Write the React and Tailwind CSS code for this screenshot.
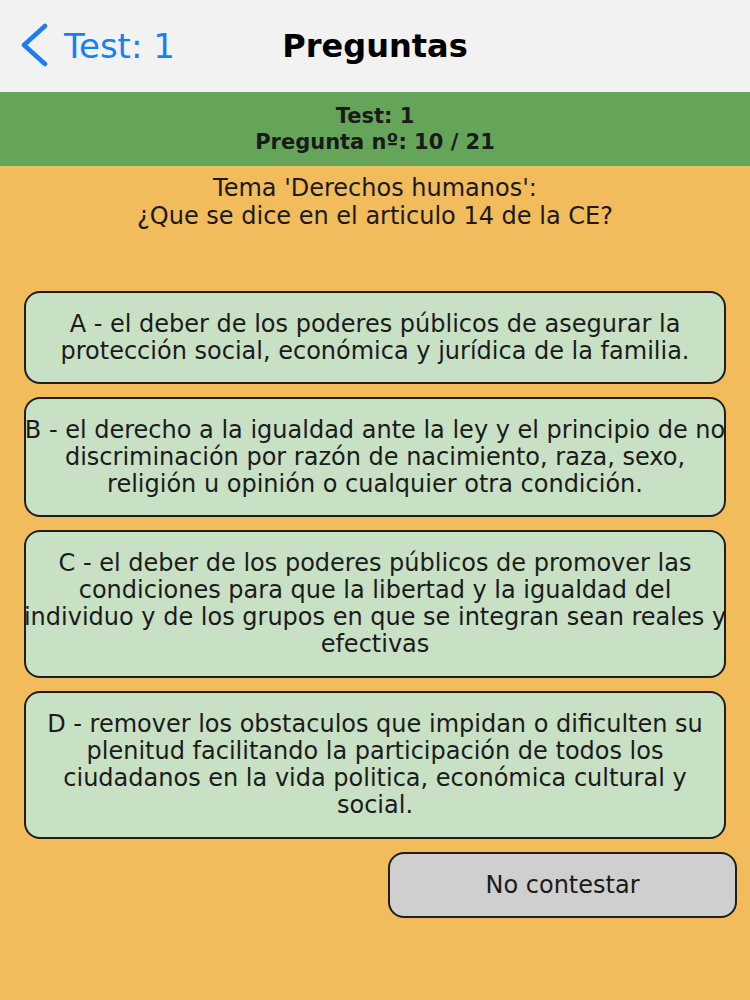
import React from "react";

const answers = [
  {
    h: "h-[93px]",
    lines: [
      "A - el deber de los poderes públicos de asegurar la",
      "protección social, económica y jurídica de la familia.",
    ],
  },
  {
    h: "h-[120px]",
    lines: [
      "B - el derecho a la igualdad ante la ley y el principio de no",
      "discriminación por razón de nacimiento, raza, sexo,",
      "religión u opinión o cualquier otra condición.",
    ],
  },
  {
    h: "h-[148px]",
    lines: [
      "C - el deber de los poderes públicos de promover las",
      "condiciones para que la libertad y la igualdad del",
      "individuo y de los grupos en que se integran sean reales y",
      "efectivas",
    ],
  },
  {
    h: "h-[148px]",
    lines: [
      "D - remover los obstaculos que impidan o dificulten su",
      "plenitud facilitando la participación de todos los",
      "ciudadanos en la vida politica, económica cultural y",
      "social.",
    ],
  },
];

const Answer = ({ h, lines }) => (
  <div
    className={`${h} w-full flex flex-col items-center justify-center bg-[#c8e1c4] border-2 border-[#1e1e1e] rounded-[16px] text-[24px] leading-[27px] text-[#1b1b1b]`}
  >
    {lines.map((l, i) => (
      <div key={i} className="whitespace-nowrap">
        {l}
      </div>
    ))}
  </div>
);

export default function App() {
  return (
    <div className="w-[750px] h-[1000px] flex flex-col bg-[#f2bb5b] font-['DejaVu_Sans',sans-serif] overflow-hidden">
      {/* nav bar */}
      <div className="h-[92px] shrink-0 grid grid-cols-[1fr_auto_1fr] items-center bg-[#f1f2f1]">
        <div className="flex items-center pl-[18px] text-[#1a7ef0]">
          <svg width="32" height="44" viewBox="0 0 32 44" className="mb-[2px]">
            <path
              d="M27 3 L6 22 L27 41"
              fill="none"
              stroke="#1a7ef0"
              strokeWidth="4.5"
              strokeLinecap="round"
              strokeLinejoin="round"
            />
          </svg>
          <span className="ml-[14px] text-[34px] leading-none">Test: 1</span>
        </div>
        <h1 className="text-[32px] font-bold leading-none text-black">Preguntas</h1>
        <div />
      </div>

      {/* green info bar */}
      <div className="h-[74px] shrink-0 flex flex-col items-center justify-center bg-[#64a55a] text-[21px] font-bold leading-[26px] text-[#1a1a1a]">
        <div>Test: 1</div>
        <div>Pregunta nº: 10 / 21</div>
      </div>

      {/* question */}
      <div className="pt-[8px] flex flex-col items-center text-[24px] leading-[28px] text-[#1a1a1a]">
        <div>Tema 'Derechos humanos':</div>
        <div>¿Que se dice en el articulo 14 de la CE?</div>
      </div>

      {/* answers */}
      <div className="mt-[61px] px-[24px] flex flex-col gap-[13px]">
        {answers.map((a, i) => (
          <Answer key={i} h={a.h} lines={a.lines} />
        ))}
      </div>

      <div className="mt-[13px] ml-[388px] w-[349px] h-[66px] flex items-center justify-center bg-[#d0cfd0] border-2 border-[#1e1e1e] rounded-[16px] text-[24px] text-[#1a1a1a]">
        No contestar
      </div>
    </div>
  );
}
